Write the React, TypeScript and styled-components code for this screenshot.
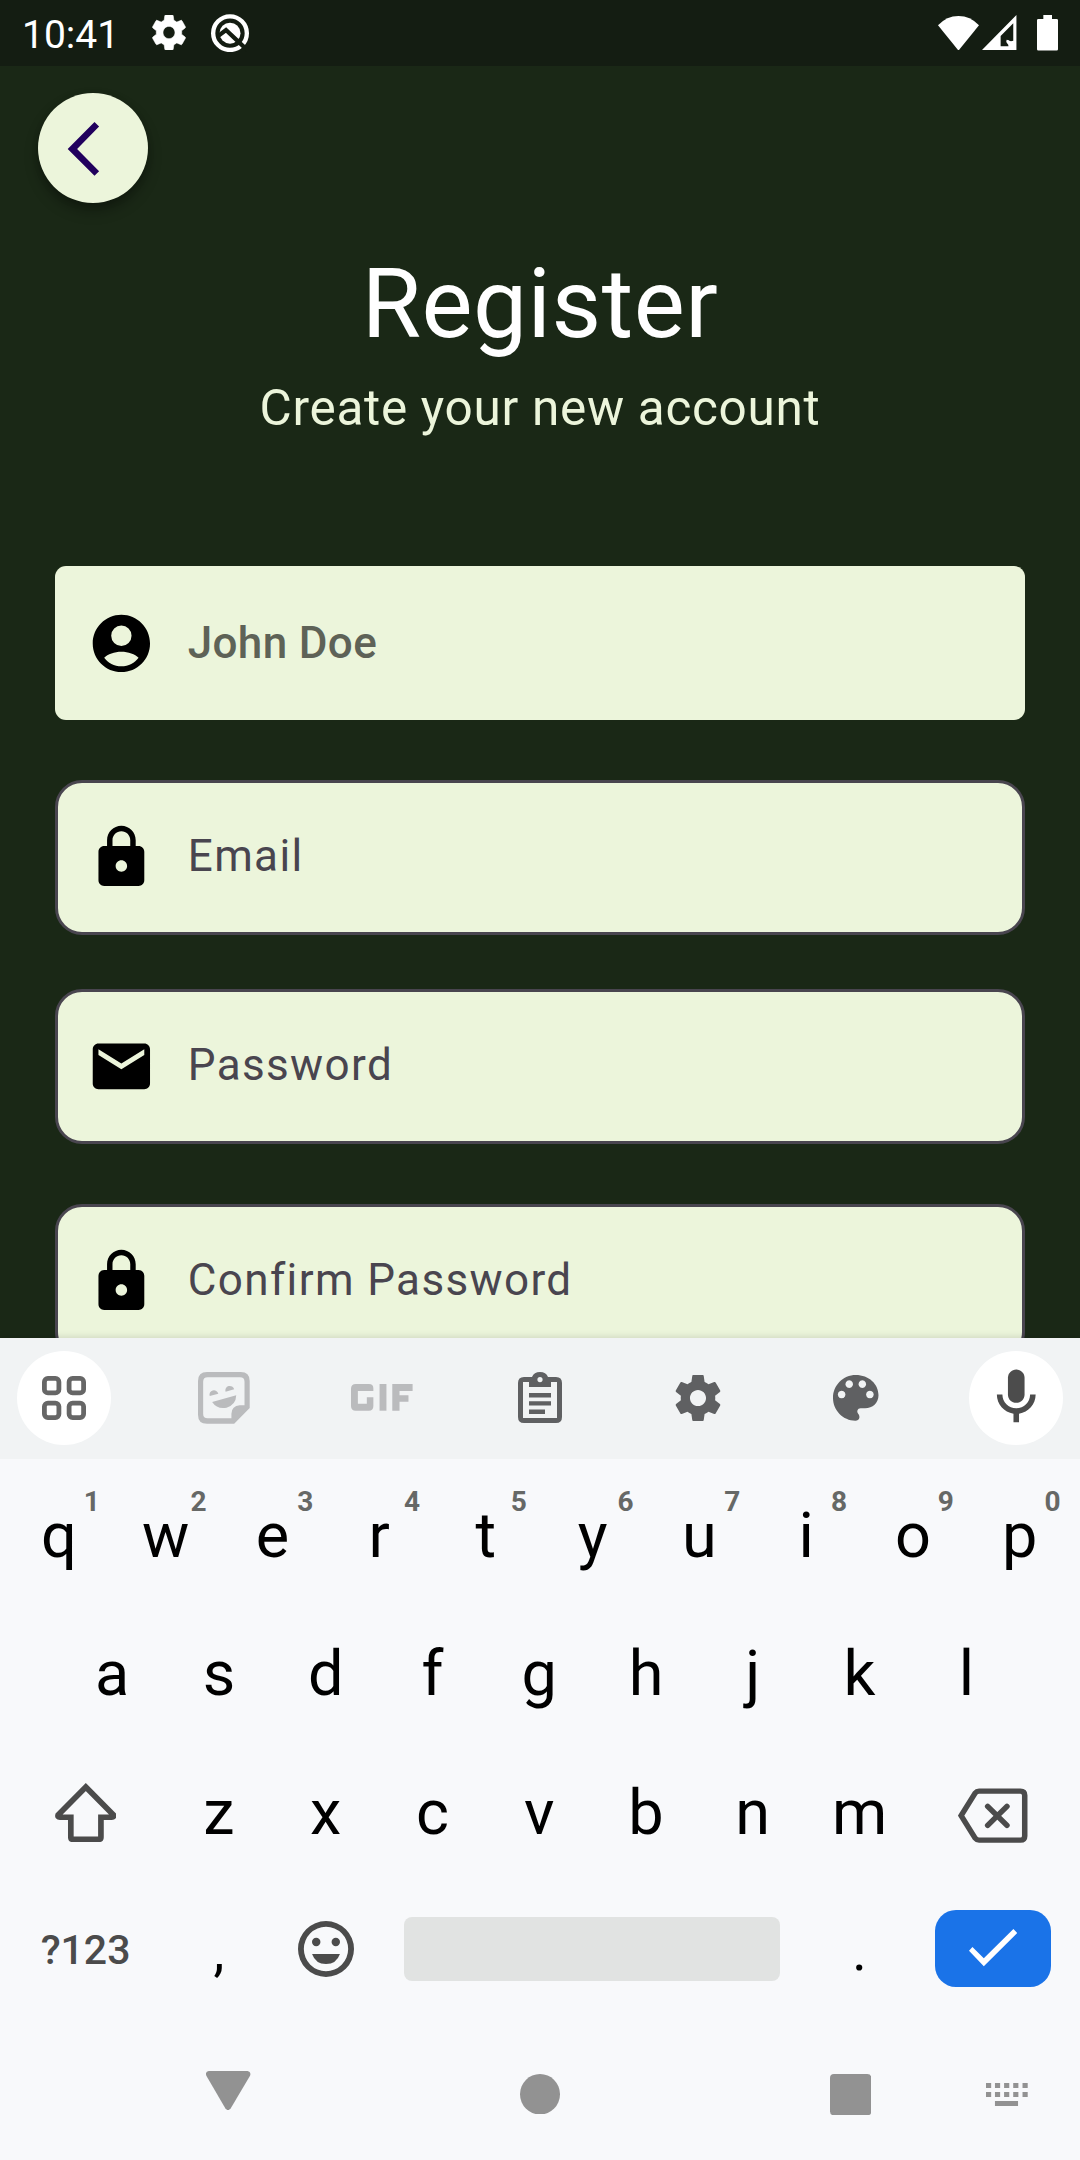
import React from 'react';
import styled, { createGlobalStyle } from 'styled-components';

const GlobalStyle = createGlobalStyle`
  *, *::before, *::after { box-sizing: border-box; }
  html, body { margin: 0; padding: 0; }
  body { font-family: Roboto, "Noto Sans", sans-serif; background: #1a2816; }
  svg { display: block; flex: none; }
`;

const Screen = styled.div`
  display: flex;
  flex-direction: column;
  width: 1080px;
  height: 2160px;
  overflow: hidden;
  background: #1a2816;
`;

/* ---------- status bar ---------- */

const StatusBar = styled.header`
  flex: none;
  display: flex;
  align-items: center;
  justify-content: space-between;
  height: 66px;
  padding: 0 22px;
  background: #141d12;
  color: #fff;
`;

const StatusGroup = styled.div<{ $gap: number }>`
  display: flex;
  align-items: center;
  gap: ${(p) => p.$gap}px;
`;

const Clock = styled.span`
  width: 96px;
  font-size: 39px;
  line-height: 66px;
  white-space: nowrap;
  padding-top: 3px;
`;

/* ---------- form ---------- */

const Content = styled.main`
  display: flex;
  flex-direction: column;
  flex: none;
  height: 1272px;
  padding: 27px 55px 0;
  overflow: hidden;
`;

const BackButton = styled.button`
  flex: none;
  display: flex;
  align-items: center;
  justify-content: center;
  width: 110px;
  height: 110px;
  margin-left: -17px;
  padding: 0;
  border: 0;
  border-radius: 50%;
  background: #ecf5db;
  box-shadow: 0 8px 14px rgba(0, 0, 0, 0.3), 0 2px 6px rgba(0, 0, 0, 0.15);
`;

const Title = styled.h1`
  margin: 46px 0 0;
  font-size: 96.25px;
  line-height: 110px;
  font-weight: 400;
  letter-spacing: 0.5px;
  text-align: center;
  color: #fff;
`;

const Subtitle = styled.p`
  margin: 16px 0 0;
  font-size: 49.5px;
  line-height: 66px;
  letter-spacing: 0.69px;
  text-align: center;
  color: #ecf5db;
`;

const Form = styled.form`
  display: flex;
  flex-direction: column;
  margin-top: 125px;
`;

const Field = styled.label<{ $outlined?: boolean; $gap?: number }>`
  flex: none;
  display: flex;
  align-items: center;
  gap: 32px;
  height: ${(p) => (p.$outlined ? 155 : 154)}px;
  margin-top: ${(p) => p.$gap ?? 0}px;
  padding-left: ${(p) => (p.$outlined ? 29 : 32)}px;
  border: ${(p) => (p.$outlined ? '3px solid #49454f' : '0')};
  border-radius: ${(p) => (p.$outlined ? 27 : 11)}px;
  background: #ecf5db;
`;

const FieldText = styled.span<{ $filled?: boolean }>`
  padding-bottom: ${(p) => (p.$filled ? 0 : 3)}px;
  font-size: 44px;
  line-height: 66px;
  letter-spacing: ${(p) => (p.$filled ? 0.35 : 1.375)}px;
  font-weight: ${(p) => (p.$filled ? 500 : 400)};
  color: ${(p) => (p.$filled ? '#5e6257' : '#49454f')};
`;

/* ---------- keyboard ---------- */

const Keyboard = styled.section`
  position: relative;
  flex: 1;
  display: flex;
  flex-direction: column;
  background: #f8f9fb;
  box-shadow: 0 0 8px rgba(0, 0, 0, 0.16);
`;

const Toolbar = styled.div`
  flex: none;
  display: flex;
  align-items: center;
  justify-content: space-between;
  height: 121px;
  padding: 0 17px 2px;
  background: #f1f3f4;
`;

const RoundTool = styled.div`
  display: flex;
  align-items: center;
  justify-content: center;
  width: 94px;
  height: 94px;
  border-radius: 50%;
  background: #fff;
`;

const Tools = styled.div`
  display: flex;
  width: 790px;
`;

const Tool = styled.div`
  flex: 1;
  display: flex;
  align-items: center;
  justify-content: center;
`;

const Keys = styled.div`
  flex: none;
  display: grid;
  grid-template-rows: 138px 138px 140px 134px;
  padding: 7px 7px 0 5.5px;
`;

const KeyRow = styled.div<{ $inset?: number }>`
  display: flex;
  padding: 0 ${(p) => p.$inset ?? 0}px;
`;

const Key = styled.div<{ $grow?: number; $size?: number; $drop?: number }>`
  position: relative;
  flex: ${(p) => p.$grow ?? 1} 1 0;
  min-width: 0;
  display: flex;
  align-items: center;
  justify-content: center;
  padding-top: ${(p) => p.$drop ?? 0}px;
  font-size: ${(p) => p.$size ?? 63}px;
  color: #000;
`;

const Hint = styled.span`
  position: absolute;
  left: 50%;
  top: 22px;
  width: 66px;
  font-size: 28px;
  line-height: 28px;
  font-weight: 700;
  text-align: center;
  color: #666866;
`;

const SymbolsLabel = styled.span`
  font-size: 41px;
  font-weight: 500;
  color: #4b4b4b;
`;

const SpaceBar = styled.div`
  width: 376px;
  height: 64px;
  margin-right: 2px;
  border-radius: 8px;
  background: #e1e3e2;
`;

const Enter = styled.div`
  display: flex;
  align-items: center;
  justify-content: center;
  width: 116px;
  height: 77px;
  margin-bottom: 2px;
  border-radius: 21px;
  background: #1a73e8;
`;

const NavBar = styled.nav`
  display: grid;
  grid-template-columns: 311px 311px 290px 1fr;
  margin-left: 73px;
  padding-top: 55px;
`;

const NavItem = styled.div<{ $drop: number; $before?: number; $after?: number }>`
  display: flex;
  justify-content: center;
  padding: ${(p) => p.$drop}px ${(p) => p.$after ?? 0}px 0 ${(p) => p.$before ?? 0}px;
`;

/* ---------- icons ---------- */

type ArtProps = {
  box: string;
  w: number;
  h: number;
  color?: string;
  children: React.ReactNode;
};

const Art = ({ box, w, h, color = '#fff', children }: ArtProps) => (
  <svg viewBox={box} width={w} height={h} fill={color} preserveAspectRatio="none" aria-hidden="true">
    {children}
  </svg>
);

const GEAR =
  'M19.43 12.98c.04-.32.07-.64.07-.98s-.03-.66-.07-.98l2.11-1.65c.19-.15.24-.42.12-.64l-2-3.46c-.12-.22-.39-.3-.61-.22l-2.49 1c-.52-.4-1.08-.73-1.69-.98l-.38-2.65C14.46 2.18 14.25 2 14 2h-4c-.25 0-.46.18-.49.42l-.38 2.65c-.61.25-1.17.59-1.69.98l-2.49-1c-.23-.09-.49 0-.61.22l-2 3.46c-.13.22-.07.49.12.64l2.11 1.65c-.04.32-.07.65-.07.98s.03.66.07.98l-2.11 1.65c-.19.15-.24.42-.12.64l2 3.46c.12.22.39.3.61.22l2.49-1c.52.4 1.08.73 1.69.98l.38 2.65c.03.24.24.42.49.42h4c.25 0 .46-.18.49-.42l.38-2.65c.61-.25 1.17-.59 1.69-.98l2.49 1c.23.09.49 0 .61-.22l2-3.46c.12-.22.07-.49-.12-.64l-2.11-1.65zM12 15.5c-1.93 0-3.5-1.57-3.5-3.5s1.57-3.5 3.5-3.5 3.5 1.57 3.5 3.5-1.57 3.5-3.5 3.5z';

const StatusGear = () => (
  <Art box="2 2 20 20" w={34} h={35}>
    <path d={GEAR} stroke="#fff" strokeWidth="0.3" />
  </Art>
);

const StatusCompass = () => (
  <Art box="631 42 114 115" w={38} h={38.3}>
    <circle cx="688" cy="99.5" r="50.5" fill="none" stroke="#fff" strokeWidth="13" />
    <circle cx="688" cy="99.5" r="31.5" />
    <path d="M650 110 L676 90 L748 158" fill="none" stroke="#141d12" strokeWidth="13" />
  </Art>
);

const Wifi = () => (
  <Art box="234 45 123 104" w={41} h={34.6}>
    <path d="M295.5 149 L234 73 Q260 45 295.5 45 Q331 45 357 73 Z" />
  </Art>
);

const Signal = () => (
  <Art box="367 45 104 106" w={34.6} h={35.3}>
    <path fillRule="evenodd" d="M367 150 L470.5 45 V150 Z M423 108 V139 H449 L440 126 L441 119 L454 124 L461 122 V70 Z" />
    <path d="M443 121 L459 137 M460 123 V138 M446 138 H461" stroke="#fff" strokeWidth="5" fill="none" />
  </Art>
);

const Battery = () => (
  <Art box="531 45 63 107" w={21} h={35.6}>
    <path d="M550 45 H576 V57 H590 Q594 57 594 61 V148 Q594 152 590 152 H535 Q531 152 531 148 V61 Q531 57 535 57 H550 Z" />
  </Art>
);

const Chevron = () => (
  <svg width="110" height="110" viewBox="-0.7 0 110 110" fill="#21005d" aria-hidden="true">
    <path d="M29 56 L55.8 29 L60.4 33.6 L38.4 56 L60.4 78.3 L55.8 82.8 Z" />
  </svg>
);

const FIELD_ICONS = {
  account:
    'M12 2C6.48 2 2 6.48 2 12s4.48 10 10 10 10-4.48 10-10S17.52 2 12 2zm0 3.8a3.55 3.55 0 1 1 0 7.1 3.55 3.55 0 0 1 0-7.1zm0 14.2c-2.5 0-4.71-1.28-6-3.02 1.2-1.25 3.6-2.08 6-2.08s4.8.83 6 2.08c-1.29 1.74-3.5 3.02-6 3.02z',
  lock:
    'M18 8h-1V6c0-2.76-2.24-5-5-5S7 3.24 7 6v2H6c-1.1 0-2 .9-2 2v10c0 1.1.9 2 2 2h12c1.1 0 2-.9 2-2V10c0-1.1-.9-2-2-2zm-6 9c-1.1 0-2-.9-2-2s.9-2 2-2 2 .9 2 2-.9 2-2 2zm3.1-9H8.9V6c0-1.71 1.39-3.1 3.1-3.1 1.71 0 3.1 1.39 3.1 3.1v2z',
  mail:
    'M20 4H4c-1.1 0-1.99.9-1.99 2L2 18c0 1.1.9 2 2 2h16c1.1 0 2-.9 2-2V6c0-1.1-.9-2-2-2zm0 4l-8 5-8-5V6l8 5 8-5v2z',
};

const FieldIcon = ({ name }: { name: keyof typeof FIELD_ICONS }) => (
  <svg width="68.75" height="68.75" viewBox="0 0 24 24" fill="#000" aria-hidden="true">
    <path d={FIELD_ICONS[name]} />
  </svg>
);

const GridIcon = () => (
  <Art box="0 0 44 44" w={44} h={44} color="none">
    {[2.4, 27.1].map((y) =>
      [2.4, 27.1].map((x) => (
        <rect key={`${x}-${y}`} x={x} y={y} width="14.5" height="14.5" rx="3.5" stroke="#666" strokeWidth="4.8" />
      )),
    )}
  </Art>
);

const StickerIcon = () => (
  <Art box="574 125 150 156" w={51.7} h={52} color="#babbbd">
    <path
      fillRule="evenodd"
      d="M600 125 H698 Q724 125 724 152 V233 L679 280 H600 Q574 280 574 253 V152 Q574 125 600 125 Z M602 141 Q589 141 589 154 V251 Q589 264 602 264 H671 V250 Q672 227 695 225 H709 V154 Q709 141 696 141 Z"
    />
    <path d="M608 197 A13 13 0 1 1 633 190 Z M654 184 A13 13 0 1 1 679 177 Z M615 215 L685 195 Q684 224 657 232 Q630 238 615 215 Z" />
  </Art>
);

const GifIcon = () => (
  <Art box="1018 164 179 80" w={61.6} h={26.7} color="#babbbd">
    <path d="M1032 164 H1070 Q1083 164 1083 177 V185 H1038 V223 H1064 V204 H1083 V230 Q1083 244 1070 244 H1032 Q1018 244 1018 230 V178 Q1018 164 1032 164 Z" />
    <path d="M1101 164 H1121 V244 H1101 Z" />
    <path d="M1138 164 H1197 V185 H1159 V198 H1185 V217 H1159 V244 H1138 Z" />
  </Art>
);

const ClipboardIcon = () => (
  <Art box="0 0 44 52" w={44} h={52} color="#5f6062">
    <path
      fillRule="evenodd"
      d="M6 5 H14 Q16 0 22 0 Q28 0 30 5 H38 Q44 5 44 11 V45 Q44 51 38 51 H6 Q0 51 0 45 V11 Q0 5 6 5 Z M5 10 V46 H39 V10 H33 V15 H11 V10 Z M22 5 A2.6 2.6 0 1 0 22 10.2 A2.6 2.6 0 1 0 22 5 Z"
    />
    <path d="M11 21 H33 V25.4 H11 Z M11 29.3 H33 V33.6 H11 Z M11 37.6 H27 V42 H11 Z" />
  </Art>
);

const SettingsIcon = () => (
  <Art box="2 2 20 20" w={46} h={46} color="#5f6062">
    <path d={GEAR} />
  </Art>
);

const PaletteIcon = () => (
  <Art box="850 133 132 138" w={45.5} h={46} color="#5f6062">
    <path
      fillRule="evenodd"
      d="M916 133 C954 133 982 160 982 194 C982 217 965 233 943 233 H930 C921 233 918 243 923 249 C930 257 927 270 915 270 C879 270 850 239 850 202 C850 164 879 133 916 133 Z M875 180 a11 11.5 0 1 0 .1 0 Z M897 149 a11 11.5 0 1 0 .1 0 Z M935 149 a11 11.5 0 1 0 .1 0 Z M957 180 a11 11.5 0 1 0 .1 0 Z"
    />
  </Art>
);

const MicIcon = () => (
  <Art box="0 0 24 24" w={66.5} h={66.5} color="#4c4c4c">
    <path d="M12 14c1.66 0 3-1.34 3-3V5c0-1.66-1.34-3-3-3S9 3.34 9 5v6c0 1.66 1.34 3 3 3z" />
    <path d="M17 11c0 2.76-2.24 5-5 5s-5-2.24-5-5H5c0 3.53 2.61 6.43 6 6.92V21h2v-3.08c3.39-.49 6-3.39 6-6.92h-2z" />
  </Art>
);

const ShiftIcon = () => (
  <Art box="159 549 179 179" w={61.6} h={59.7} color="none">
    <path
      d="M248.5 561 L329 645 Q331 652 324 652 H292.5 V712 Q292.5 718 287 718 H210 Q205 718 205 712 V652 H173 Q166 652 168 645 Z"
      stroke="#4b4b4b"
      strokeWidth="16.5"
    />
  </Art>
);

const BackspaceIcon = () => (
  <Art box="1213 566 203 166" w={70} h={55.3} color="none">
    <path
      d="M1222 649 L1263 581 Q1267 575.5 1274 575.5 H1394 Q1406.5 575.5 1406.5 588 V710 Q1406.5 722.5 1394 722.5 H1274 Q1267 722.5 1263 717 Z M1299 621 L1355 678 M1355 621 L1299 678"
      stroke="#4b4b4b"
      strokeWidth="16"
      strokeLinecap="round"
    />
  </Art>
);

const EmojiIcon = () => (
  <Art box="862 123 163 168" w={56} h={56} color="#4b4b4b">
    <path
      fillRule="evenodd"
      d="M943.5 123 A81.5 84 0 1 0 943.5 291 A81.5 84 0 1 0 943.5 123 Z M943.5 140.5 A64.5 66.5 0 1 1 943.5 273.5 A64.5 66.5 0 1 1 943.5 140.5 Z"
    />
    <ellipse cx="915" cy="186" rx="12.3" ry="12.7" />
    <ellipse cx="972" cy="186" rx="12.3" ry="12.7" />
    <path d="M903 222 H984 Q974 252 943.5 252 Q913 252 903 222 Z" />
  </Art>
);

const CheckIcon = () => (
  <Art box="1248 153 140 112" w={48.2} h={37.3}>
    <path d="M1248 218 L1258 207 L1291 241 L1377 153 L1388 165 L1291 265 Z" />
  </Art>
);

const NAV = '#929292';

const NavBack = () => (
  <Art box="599 573 129 118" w={44.4} h={39.3} color={NAV}>
    <path d="M607 573 H720 Q731 575 727 587 L671 685 Q663 696 655 685 L600 587 Q596 575 607 573 Z" />
  </Art>
);

const NavHome = () => (
  <Art box="0 0 40 40" w={40} h={40.5} color={NAV}>
    <circle cx="20" cy="20" r="20" />
  </Art>
);

const NavRecent = () => (
  <Art box="0 0 41 41" w={41.3} h={41.3} color={NAV}>
    <rect width="41" height="41" rx="4" />
  </Art>
);

const NavKeyboard = () => (
  <Art box="1295 609 121 69" w={41.7} h={23} color={NAV}>
    {[609, 636].map((y) =>
      [1295, 1321, 1347.5, 1374, 1401].map((x) => <rect key={`${x}-${y}`} x={x} y={y} width="15" height="15" />),
    )}
    <rect x="1321" y="663" width="67" height="15" />
  </Art>
);

/* ---------- screen ---------- */

const TOP_ROW = [
  ['q', '1'], ['w', '2'], ['e', '3'], ['r', '4'], ['t', '5'],
  ['y', '6'], ['u', '7'], ['i', '8'], ['o', '9'], ['p', '0'],
];
const HOME_ROW = 'asdfghjkl'.split('');
const LOWER_ROW = 'zxcvbnm'.split('');

const FIELDS: { icon: keyof typeof FIELD_ICONS; text: string; gap: number }[] = [
  { icon: 'lock', text: 'Email', gap: 60 },
  { icon: 'mail', text: 'Password', gap: 54 },
  { icon: 'lock', text: 'Confirm Password', gap: 60 },
];

export default function App() {
  return (
    <Screen>
      <GlobalStyle />
      <StatusBar>
        <StatusGroup $gap={33.5}>
          <Clock>10:41</Clock>
          <StatusGroup $gap={25}>
            <StatusGear />
            <StatusCompass />
          </StatusGroup>
        </StatusGroup>
        <StatusGroup $gap={20}>
          <StatusGroup $gap={3.5}>
            <Wifi />
            <Signal />
          </StatusGroup>
          <Battery />
        </StatusGroup>
      </StatusBar>

      <Content>
        <BackButton type="button" aria-label="Back">
          <Chevron />
        </BackButton>
        <Title>Register</Title>
        <Subtitle>Create your new account</Subtitle>
        <Form>
          <Field>
            <FieldIcon name="account" />
            <FieldText $filled>John Doe</FieldText>
          </Field>
          {FIELDS.map((f) => (
            <Field key={f.text} $outlined $gap={f.gap}>
              <FieldIcon name={f.icon} />
              <FieldText>{f.text}</FieldText>
            </Field>
          ))}
        </Form>
      </Content>

      <Keyboard>
        <Toolbar>
          <RoundTool><GridIcon /></RoundTool>
          <Tools>
            <Tool><StickerIcon /></Tool>
            <Tool><GifIcon /></Tool>
            <Tool><ClipboardIcon /></Tool>
            <Tool><SettingsIcon /></Tool>
            <Tool><PaletteIcon /></Tool>
          </Tools>
          <RoundTool><MicIcon /></RoundTool>
        </Toolbar>
        <Keys>
          <KeyRow>
            {TOP_ROW.map(([letter, hint]) => (
              <Key key={letter}>
                {letter}
                <Hint>{hint}</Hint>
              </Key>
            ))}
          </KeyRow>
          <KeyRow $inset={53.3}>
            {HOME_ROW.map((letter) => <Key key={letter}>{letter}</Key>)}
          </KeyRow>
          <KeyRow>
            <Key $grow={1.5} $drop={1}><ShiftIcon /></Key>
            {LOWER_ROW.map((letter) => <Key key={letter}>{letter}</Key>)}
            <Key $grow={1.5} $drop={8}><BackspaceIcon /></Key>
          </KeyRow>
          <KeyRow>
            <Key $grow={1.5} $drop={1}><SymbolsLabel>?123</SymbolsLabel></Key>
            <Key $size={55} $drop={3}>,</Key>
            <Key><EmojiIcon /></Key>
            <Key $grow={4}><SpaceBar /></Key>
            <Key $size={55} $drop={3}>.</Key>
            <Key $grow={1.5}><Enter><CheckIcon /></Enter></Key>
          </KeyRow>
        </Keys>
        <NavBar>
          <NavItem $drop={0}><NavBack /></NavItem>
          <NavItem $drop={2.5}><NavHome /></NavItem>
          <NavItem $drop={3} $before={21}><NavRecent /></NavItem>
          <NavItem $drop={12} $after={51.5}><NavKeyboard /></NavItem>
        </NavBar>
      </Keyboard>
    </Screen>
  );
}
